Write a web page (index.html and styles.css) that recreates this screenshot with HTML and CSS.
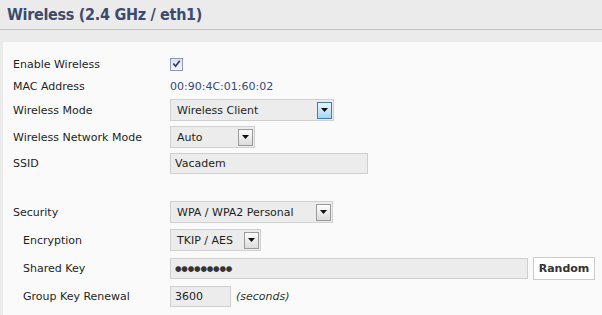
FILE: index.html
```html
<!DOCTYPE html>
<html>
<head>
<meta charset="utf-8">
<link rel="stylesheet" href="styles.css">
</head>
<body>
<div class="header"><h1 class="title">Wireless (2.4 GHz / eth1)</h1></div>
<div class="panel">
  <div class="row r22">
    <div class="label">Enable Wireless</div>
    <div class="field">
      <span class="checkbox"><svg width="12" height="12" viewBox="0 0 12 12"><path d="M2.5 5.5 L5 8.5 L9.5 2.5" fill="none" stroke="#2a3a6a" stroke-width="1.8"/></svg></span>
    </div>
  </div>
  <div class="row r22">
    <div class="label">MAC Address</div>
    <div class="field mac">00:90:4C:01:60:02</div>
  </div>
  <div class="row r26">
    <div class="label">Wireless Mode</div>
    <div class="field">
      <div class="select w163"><span class="val">Wireless Client</span><span class="arrow hot"><svg width="7" height="4" viewBox="0 0 7 4"><path d="M0 0H7L3.5 4Z" fill="#111"/></svg></span></div>
    </div>
  </div>
  <div class="row r28">
    <div class="label">Wireless Network Mode</div>
    <div class="field">
      <div class="select w84"><span class="val">Auto</span><span class="arrow"><svg width="7" height="4" viewBox="0 0 7 4"><path d="M0 0H7L3.5 4Z" fill="#111"/></svg></span></div>
    </div>
  </div>
  <div class="row r24">
    <div class="label">SSID</div>
    <div class="field"><div class="input w198">Vacadem</div></div>
  </div>
  <div class="spacer"></div>
  <div class="row r28">
    <div class="label">Security</div>
    <div class="field">
      <div class="select w162"><span class="val">WPA / WPA2 Personal</span><span class="arrow"><svg width="7" height="4" viewBox="0 0 7 4"><path d="M0 0H7L3.5 4Z" fill="#111"/></svg></span></div>
    </div>
  </div>
  <div class="row r28">
    <div class="label sub">Encryption</div>
    <div class="field">
      <div class="select w90"><span class="val">TKIP / AES</span><span class="arrow"><svg width="7" height="4" viewBox="0 0 7 4"><path d="M0 0H7L3.5 4Z" fill="#111"/></svg></span></div>
    </div>
  </div>
  <div class="row r28">
    <div class="label sub">Shared Key</div>
    <div class="field">
      <div class="input w358 dots">●●●●●●●●●</div>
      <button class="btn">Random</button>
    </div>
  </div>
  <div class="row r28">
    <div class="label sub">Group Key Renewal</div>
    <div class="field">
      <div class="input w60">3600</div>
      <span class="hint">(seconds)</span>
    </div>
  </div>
</div>
</body>
</html>
```
FILE: styles.css
```css
html, body { margin: 0; padding: 0; }
body {
  background: #ebebeb;
  font-family: "DejaVu Sans", Verdana, sans-serif;
  font-size: 11px;
  color: #1e1e1e;
  width: 602px;
  height: 315px;
  overflow: hidden;
}
.header {
  height: 30px;
  border-bottom: 1px solid #c4c4c4;
  box-sizing: border-box;
  padding-left: 7px;
}
.title {
  margin: 0;
  font-family: "DejaVu Sans Condensed", "DejaVu Sans", sans-serif;
  font-size: 16px;
  letter-spacing: -0.3px;
  font-weight: bold;
  color: #3d4a6e;
  line-height: 30px;
}
.panel {
  margin: 12px 0 0 3px;
  background: #fafafa;
  padding: 11px 0 0 10px;
  height: 273px;
  box-sizing: border-box;
}
.row { display: flex; align-items: center; }
.r22 { height: 22px; }
.r24 { height: 24px; }
.r26 { height: 26px; }
.r28 { height: 28px; }
.spacer { height: 23px; }
.label { width: 157px; flex: none; }
.label.sub { padding-left: 10px; width: 147px; }
.field { display: flex; align-items: center; }
.mac { color: #34497a; }
.checkbox {
  width: 11px; height: 11px;
  border: 1px solid #8a9ab8;
  background: linear-gradient(#dfe3ea, #f6f7f9);
  display: flex; align-items: center; justify-content: center;
}
.select {
  height: 22px;
  box-sizing: border-box;
  border: 1px solid #d0d0d0;
  background: #ececec;
  display: flex;
  align-items: center;
  justify-content: space-between;
  padding: 0 1px 0 6px;
}
.w163 { width: 164px; }
.w84 { width: 85px; }
.w162 { width: 163px; }
.w90 { width: 91px; }
.arrow {
  width: 15px; height: 17px;
  box-sizing: border-box;
  border: 1px solid #9a9a9a;
  background: linear-gradient(#fdfdfd, #dcdcdc);
  display: flex; align-items: center; justify-content: center;
}
.arrow.hot {
  border-color: #3c7fb1;
  background: linear-gradient(#eaf6fd, #a7d9f5);
}
.input {
  height: 21px;
  box-sizing: border-box;
  border: 1px solid #cfcfcf;
  background: #ececec;
  padding: 0 4px;
  line-height: 19px;
}
.w198 { width: 198px; }
.w358 { width: 358px; }
.w60 { width: 61px; }
.dots { font-size: 7.5px; letter-spacing: -0.2px; color: #333; }
.btn {
  margin-left: 5px;
  height: 23px;
  width: 62px;
  border: 1px solid #cccccc;
  background: #ffffff;
  font-family: "DejaVu Sans", Verdana, sans-serif;
  font-size: 11px;
  font-weight: bold;
  color: #333;
  padding: 0;
}
.hint { font-style: italic; margin-left: 5px; color: #333; }
```
